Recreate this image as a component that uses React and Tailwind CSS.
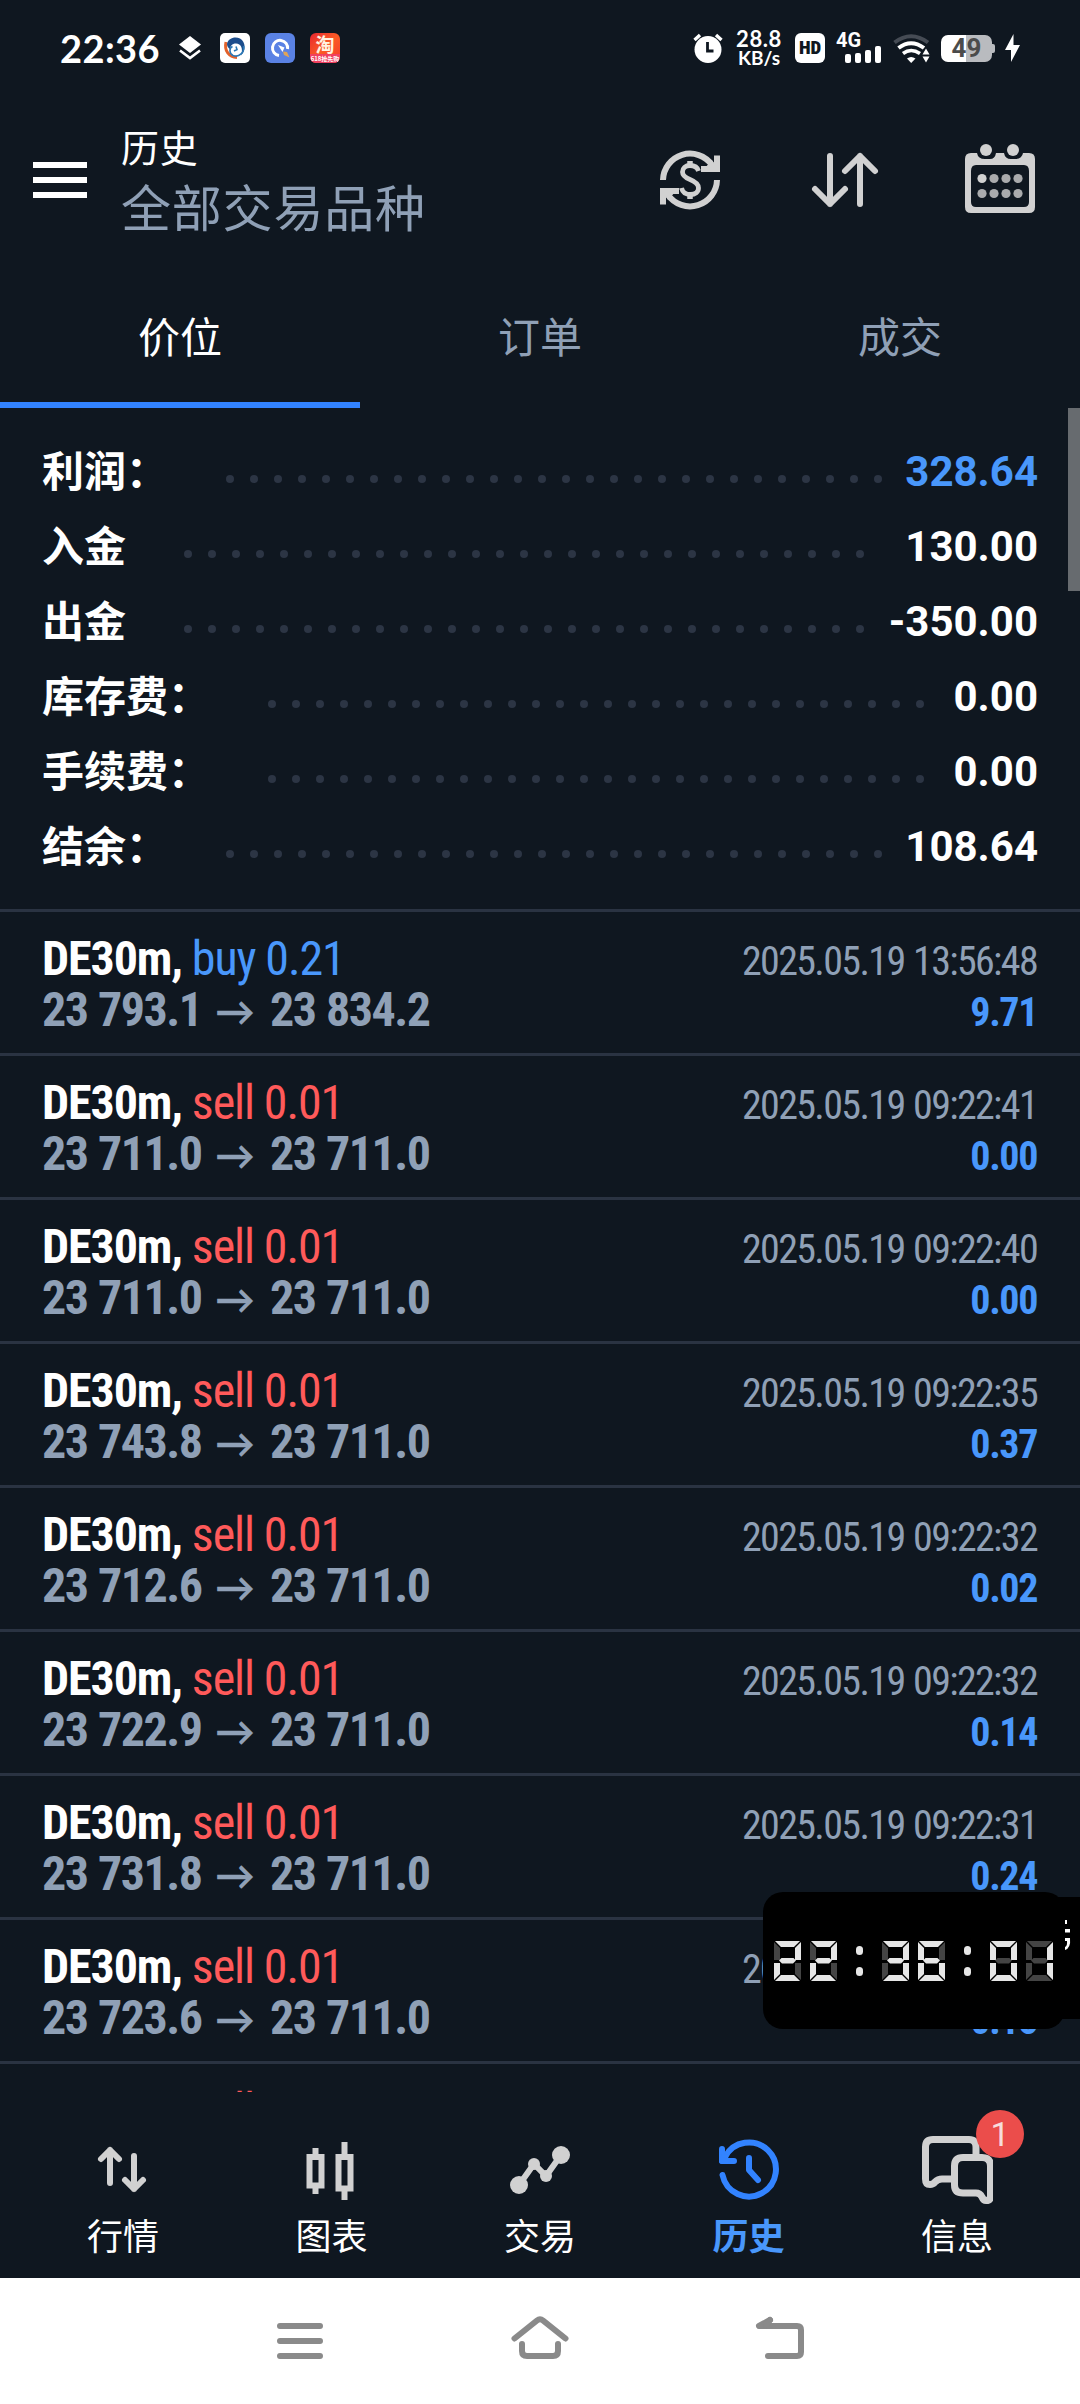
import React, { useState } from 'react';

const summary = [
  { label: '利润：', value: '328.64', dots: 28, highlight: true },
  { label: '入金', value: '130.00', dots: 29 },
  { label: '出金', value: '-350.00', dots: 29 },
  { label: '库存费：', value: '0.00', dots: 28 },
  { label: '手续费：', value: '0.00', dots: 28 },
  { label: '结余：', value: '108.64', dots: 28 },
];

const deals = [
  { side: 'buy', volume: '0.21', open: '23 793.1', close: '23 834.2', time: '2025.05.19 13:56:48', profit: '9.71' },
  { side: 'sell', volume: '0.01', open: '23 711.0', close: '23 711.0', time: '2025.05.19 09:22:41', profit: '0.00' },
  { side: 'sell', volume: '0.01', open: '23 711.0', close: '23 711.0', time: '2025.05.19 09:22:40', profit: '0.00' },
  { side: 'sell', volume: '0.01', open: '23 743.8', close: '23 711.0', time: '2025.05.19 09:22:35', profit: '0.37' },
  { side: 'sell', volume: '0.01', open: '23 712.6', close: '23 711.0', time: '2025.05.19 09:22:32', profit: '0.02' },
  { side: 'sell', volume: '0.01', open: '23 722.9', close: '23 711.0', time: '2025.05.19 09:22:32', profit: '0.14' },
  { side: 'sell', volume: '0.01', open: '23 731.8', close: '23 711.0', time: '2025.05.19 09:22:31', profit: '0.24' },
  { side: 'sell', volume: '0.01', open: '23 723.6', close: '23 711.0', time: '2025.05.19 09:22:31', profit: '0.15' },
];

const tabs = ['价位', '订单', '成交'];

const StatusBar = () => (
  <div className="flex h-24 items-center pl-[60px] pr-[60px]">
    <span className="w-[119px] font-['Lato',sans-serif] text-[38px] font-bold leading-[48px] tracking-[0.4px]">22:36</span>
    <svg className="h-6 w-[22px]" viewBox="0 0 22 24" fill="none">
      <path d="M11 0 22 8.5 11 17 0 8.5Z" fill="#fff" />
      <path d="M1 14.5 11 22 21 14.5" stroke="#fff" strokeWidth="2.6" />
    </svg>
    <svg className="ml-[19px] size-[30px]" viewBox="0 0 30 30" fill="none">
      <rect width="30" height="30" rx="5" fill="#fff" />
      <path d="M6 9C4 18 9 24 17 24.500" stroke="#e2622b" strokeWidth="3" />
      <path d="M7 11C8 5 15 3 20 5.500C26 9 26 18 21 22.500C23.500 16 21 10.500 16 10.500C12 10.500 10 13 10.500 16.500C8 15 7 13 7 11Z" fill="#1c4d8c" />
      <path d="M23.500 13C25 19 19 25 13 22.500C9 20.500 9 15 12.500 13.500M16 13.500 17 16.500 14 18" stroke="#2b78b5" strokeWidth="1.600" />
    </svg>
    <svg className="ml-[15px] size-[30px]" viewBox="0 0 30 30" fill="none">
      <rect width="30" height="30" rx="6" fill="#5a82e4" />
      <path d="M14 22.500A7.600 7.600 0 1 1 22.600 16" stroke="#fff" strokeWidth="3" />
      <path d="M13 12 19.500 14.500 17.500 19Z" fill="#fff" />
      <path d="M18 18.500 22 19 24.500 24.500 19 22Z" fill="#e0a458" />
    </svg>
    <div className="ml-[15px] flex size-[30px] flex-col items-center overflow-hidden rounded-[6px] bg-gradient-to-br from-[#e8202f] via-[#fa5a24] to-[#f6342c] font-['Noto_Sans_CJK_SC',sans-serif] font-bold">
      <span className="h-[21px] text-[19px] leading-[21px] text-[#fff3e2]">淘</span>
      <span className="h-[9px] w-full whitespace-nowrap bg-[#f04060] text-center text-[6px] leading-[9px]">618抢先购</span>
    </div>

    <svg className="ml-auto h-[30px] w-[30px]" viewBox="0 0 30 30" fill="none">
      <circle cx="15" cy="16.500" r="13.500" fill="#fff" />
      <path d="M1.500 7 7 2M28.500 7 23 2" stroke="#fff" strokeWidth="3.400" />
      <path d="M14.500 9V18H20.500" stroke="#0f1720" strokeWidth="2.800" />
    </svg>
    <div className="ml-3 flex w-[48px] flex-col items-center whitespace-nowrap font-['Lato',sans-serif] font-bold">
      <span className="text-[22px] leading-[20px] tracking-[0.6px]">28.8</span>
      <span className="text-[19px] leading-[18px]">KB/s</span>
    </div>
    <div className="ml-3 flex size-[30px] items-center justify-center rounded-[6px] bg-white font-['Roboto',sans-serif] text-[19px] font-black leading-[30px] text-[#0f1720] [font-stretch:85%]">
      HD
    </div>
    <div className="ml-[11px] flex h-[30px] w-[46px] flex-col">
      <span className="h-[13px] font-['Roboto',sans-serif] text-[20px] font-bold leading-[14px] [font-stretch:88%]">4G</span>
      <div className="flex h-[17px] items-end gap-[4px] pl-[9px]">
        <i className="h-[9px] w-[6px] rounded-[2px] bg-white" />
        <i className="h-[10px] w-[6px] rounded-[2px] bg-white" />
        <i className="h-[13px] w-[6px] rounded-[2px] bg-white" />
        <i className="h-[17px] w-[6px] rounded-[2px] bg-white" />
      </div>
    </div>
    <svg className="ml-[11px] h-[30px] w-[38px]" viewBox="0 0 38 30" fill="none">
      <path d="M1.500 9.500Q18 -3 35 9.500" stroke="#454b54" strokeWidth="4" />
      <path d="M5.500 15Q18 5.500 31 15" stroke="#fff" strokeWidth="4" />
      <path d="M10 20.500Q18 14.500 27 20.500" stroke="#fff" strokeWidth="3.600" />
      <path d="M14 25.500Q18 22.500 22.500 25.500L18.200 30Z" fill="#fff" />
      <path d="M33 15.500 36.500 21.500H29.500ZM33 29.500 36.500 23.500H29.500Z" fill="#fff" />
    </svg>
    <div className="ml-[10px] flex items-center">
      <div className="flex h-[27px] w-[51px] items-center justify-center rounded-[7px] bg-[linear-gradient(90deg,#fff_50%,#b9bbbf_50%)] font-['Roboto',sans-serif] text-[26px] font-bold leading-[27px] text-[#4b4b4b]">
        49
      </div>
      <i className="h-[9px] w-[3px] rounded-r-[2px] bg-[#b9bbbf]" />
    </div>
    <svg className="ml-[10px] h-[28px] w-[15px]" viewBox="0 0 15 28">
      <path d="M8.500 0 0 16H6L6 28 15 11H8.500Z" fill="#fff" />
    </svg>
  </div>
);

const Header = () => (
  <header className="flex h-[168px] items-center pl-[33px] pr-[44px]">
    <div className="flex flex-col gap-[9px]">
      <i className="h-[6px] w-[54px] bg-white" />
      <i className="h-[6px] w-[54px] bg-white" />
      <i className="h-[6px] w-[54px] bg-white" />
    </div>
    <div className="ml-[34px] flex flex-col pb-[1px] font-['Noto_Sans_CJK_SC',sans-serif]">
      <h1 className="text-[38px] leading-[52px] tracking-[0.8px]">历史</h1>
      <p className="text-[50px] leading-[67px] tracking-[0.8px] text-[#8fa0b6]">全部交易品种</p>
    </div>
    <div className="ml-auto flex gap-[83px]">
      <svg className="size-[72px]" viewBox="0 0 72 72" fill="none" stroke="#d1d1d1" strokeWidth="6">
        <path d="M9 36A27 27 0 0 1 58 21" />
        <path d="M63 36A27 27 0 0 1 14 51" />
        <path d="M63 11.500V25H47" />
        <path d="M9 60.500V47H25" />
        <path d="M63 25 50 25 58 16ZM9 47 22 47 14 56Z" fill="#d1d1d1" stroke="none" />
        <path d="M44.500 27C43.500 23.500 40 21.500 36 21.500C31.500 21.500 28.500 24 28.500 28C28.500 32 31.500 33.700 36 35.500C41 37.500 44.500 39.500 44.500 44C44.500 48 41 50.500 36.500 50.500C31.500 50.500 28.500 48 27.500 44" strokeWidth="4.800" />
        <path d="M36 17V22M36 50V55" strokeWidth="5.500" />
      </svg>
      <svg className="size-[72px]" viewBox="0 0 72 72" fill="none" stroke="#d1d1d1" strokeWidth="6" strokeLinecap="round" strokeLinejoin="round">
        <path d="M21 12V60M6 45 21 60 36 45" />
        <path d="M51 60V12M36 27 51 12 66 27" />
      </svg>
      <svg className="size-[72px]" viewBox="0 0 72 72" fill="#d1d1d1">
        <path fillRule="evenodd" d="M7 9H13Q14 15 21 15H26Q31 15 32 9H40Q41 15 47 15H51Q58 15 59 9H65Q71 9 71 15V63Q71 69 65 69H7Q1 69 1 63V15Q1 9 7 9ZM12 21Q7 21 7 27V58Q7 63 12 63H60Q65 63 65 58V27Q65 21 60 21Z" />
        <circle cx="22" cy="6" r="6" />
        <circle cx="49" cy="6" r="6" />
        <circle cx="18" cy="34.500" r="4.600" />
        <g opacity="0.8">
          <circle cx="30" cy="34.500" r="4.600" />
          <circle cx="42" cy="34.500" r="4.600" />
          <circle cx="54" cy="34.500" r="4.600" />
          <circle cx="18" cy="49.500" r="4.600" />
          <circle cx="30" cy="49.500" r="4.600" />
          <circle cx="42" cy="49.500" r="4.600" />
          <circle cx="54" cy="49.500" r="4.600" />
        </g>
      </svg>
    </div>
  </header>
);

const SummaryRow = ({ label, value, dots, highlight }) => (
  <div className="flex h-[75px] items-center">
    <span className="whitespace-nowrap pb-[5px] font-['Noto_Sans_CJK_SC',sans-serif] text-[42px] font-bold leading-[70px]">{label}</span>
    <div className="ml-[58px] mt-[15px] flex gap-4">
      {Array.from({ length: dots }, (_, i) => (
        <i key={i} className="size-2 rounded-full bg-[#2c3544]" />
      ))}
    </div>
    <span
      className={`ml-auto font-['Roboto',sans-serif] text-[42px] font-bold leading-[75px] ${
        highlight ? 'text-[#4997fb]' : 'text-white'
      }`}
    >
      {value}
    </span>
  </div>
);

const DealRow = ({ deal }) => (
  <div className="h-[144px] shrink-0 border-b-[3px] border-[#2a3342] pl-[42px] pr-[43px] pt-[21px] font-['Roboto',sans-serif] text-[48px] leading-[51px] tracking-[-1.1px] [font-stretch:75%]">
    <div className="flex h-[51px] items-baseline justify-between whitespace-nowrap">
      <p>
        <span className="font-bold">DE30m,</span>{' '}
        <span className={deal.side === 'buy' ? 'text-[#4997fb]' : 'text-[#ff5a5a]'}>
          {deal.side} {deal.volume}
        </span>
      </p>
      <p className="text-[40px] leading-[40px] tracking-[-1.65px] [word-spacing:1px] text-[#8fa0b6]">{deal.time}</p>
    </div>
    <div className="flex h-[51px] items-baseline justify-between whitespace-nowrap font-bold">
      <p className="flex items-baseline tracking-[-1.5px] [word-spacing:1px] text-[#8fa0b6]">
        <span className="w-[173px]">{deal.open}</span>
        <span className="w-[55px] font-['Lato',sans-serif] text-[40px] font-bold leading-[40px]">→</span>
        <span>{deal.close}</span>
      </p>
      <p className="text-[40px] leading-[40px] tracking-[-1.4px] text-[#4997fb]">{deal.profit}</p>
    </div>
  </div>
);

const NavItem = ({ label, active, badge, children }) => (
  <div className="flex w-[208.5px] flex-col items-center">
    <div className="relative size-[72px]">
      <svg className="size-[72px]" viewBox="0 0 72 72" fill="none" stroke={active ? '#3283ff' : '#d1d1d1'} strokeWidth="6">
        {children}
      </svg>
      {badge && (
        <span className="absolute -top-[25px] left-[55px] flex size-12 items-center justify-center rounded-full bg-[#eb4d4b] font-['Roboto',sans-serif] text-[34px] leading-[48px] text-[#f7dcdc]">
          {badge}
        </span>
      )}
    </div>
    <span
      className={`mt-[5px] font-['Noto_Sans_CJK_SC',sans-serif] text-[36px] leading-[44px] ${
        active ? 'font-bold text-[#4997fb]' : 'text-white'
      }`}
    >
      {label}
    </span>
  </div>
);

const ON = '#e6e6e6';
const OFF = '#444444';

// Lit segments per digit: top, top left, top right, middle, bottom left, bottom right, bottom
const SEGMENTS = {
  0: [1, 1, 1, 0, 1, 1, 1],
  1: [0, 0, 1, 0, 0, 1, 0],
  2: [1, 0, 1, 1, 1, 0, 1],
  3: [1, 0, 1, 1, 0, 1, 1],
  6: [1, 1, 0, 1, 1, 1, 1],
};

const Digit = ({ value }) => {
  const [top, tl, tr, mid, bl, br, bottom] = SEGMENTS[value].map((lit) => (lit ? ON : OFF));
  return (
    <div className="relative flex h-[40px] w-[27px] flex-col justify-between">
      <div
        className="h-[19px] border-x-[6px] border-t-[6px]"
        style={{ borderTopColor: top, borderLeftColor: tl, borderRightColor: tr }}
      />
      <div
        className="h-[18px] border-x-[6px] border-b-[6px]"
        style={{ borderBottomColor: bottom, borderLeftColor: bl, borderRightColor: br }}
      />
      <i
        className="absolute left-[5px] top-[17px] h-[6px] w-[17px] [clip-path:polygon(3px_0,14px_0,100%_50%,14px_100%,3px_100%,0_50%)]"
        style={{ backgroundColor: mid }}
      />
      {/* dark seams between neighbouring segments */}
      <svg className="absolute inset-0 h-[40px] w-[27px]" viewBox="0 0 27 40" stroke="#000" strokeWidth="1.4">
        <path d="M0 0 7 7M27 0 20 7M0 40 7 33M27 40 20 33" />
      </svg>
    </div>
  );
};

const FloatingClock = ({ time }) => (
  <>
    <div className="absolute left-[1034px] top-[1897px] flex h-[122px] w-[46px] justify-end bg-black">
      <svg className="mt-[21px] h-9 w-4" viewBox="0 0 16 36" fill="#fff">
        <rect x="1" y="2" width="2" height="4" />
        <rect x="1" y="11" width="5" height="3.500" />
        <path d="M1 20H6Q7 30 1 32V29Q3.500 28 3 23H1Z" />
      </svg>
    </div>
    <div
      role="img"
      aria-label={time}
      className="absolute left-[763px] top-[1892px] flex h-[137px] w-[302px] items-center gap-[9px] rounded-[20px] bg-black pl-[11px]"
    >
      {time.split('').map((ch, i) =>
        ch === ':' ? (
          <div key={i} className="flex w-[27px] flex-col items-center gap-[12px]">
            <i className="h-[9px] w-[7px] rounded-full bg-[#e6e6e6]" />
            <i className="h-[9px] w-[7px] rounded-full bg-[#e6e6e6]" />
          </div>
        ) : (
          <Digit key={i} value={ch} />
        )
      )}
    </div>
  </>
);

const App = () => {
  const [activeTab, setActiveTab] = useState('价位');

  return (
    <div className="relative flex h-[2404px] w-[1080px] flex-col overflow-hidden bg-[#0f1720] text-white">
      <StatusBar />
      <Header />

      <nav className="flex h-[144px]">
        {tabs.map((tab) => (
          <button
            key={tab}
            onClick={() => setActiveTab(tab)}
            className={`flex-1 border-b-[6px] pt-[3px] font-['Noto_Sans_CJK_SC',sans-serif] text-[42px] ${
              tab === activeTab ? 'border-[#3283ff] text-white' : 'border-transparent text-[#8fa0b6]'
            }`}
          >
            {tab}
          </button>
        ))}
      </nav>

      <main className="relative flex h-[1684px] flex-col overflow-hidden">
        <section className="h-[504px] shrink-0 border-b-[3px] border-[#2a3342] px-[42px] pt-[26px]">
          {summary.map((row) => (
            <SummaryRow key={row.label} {...row} />
          ))}
        </section>
        {deals.map((deal, i) => (
          <DealRow key={i} deal={deal} />
        ))}
        <DealRow deal={deals[7]} />
        <div className="absolute right-0 top-0 h-[183px] w-3 bg-[#676b6f]" />
      </main>

      <nav className="flex h-[186px] justify-center pt-[43px]">
        <NavItem label="行情">
          <g strokeLinecap="round" strokeLinejoin="round">
            <path d="M23 48V15M14 24 23 15 32 24" />
            <path d="M47 21V54M38 45 47 54 56 45" />
          </g>
        </NavItem>
        <NavItem label="图表">
          <path d="M13.500 22H25.500V50.500H13.500ZM19.500 13V22M19.500 51V59" />
          <path d="M42.500 22H54.500V53.500H42.500ZM48.500 7V22M48.500 54V65" />
        </NavItem>
        <NavItem label="交易">
          <path d="M15 50 30 29 42 41 57 20" />
          <g fill="#d1d1d1" stroke="none">
            <circle cx="15" cy="50" r="9" />
            <circle cx="30" cy="29" r="6" />
            <circle cx="42" cy="41" r="6" />
            <circle cx="57" cy="20" r="9" />
          </g>
        </NavItem>
        <NavItem label="历史" active>
          <g strokeLinecap="round" strokeLinejoin="round">
            <path d="M9.500 40A27 27 0 1 0 12 22" />
            <path d="M9 14V26H21" />
            <path d="M9 26 11 22 14 26Z" fill="#3283ff" />
            <path d="M36 23V35L45 45" />
          </g>
        </NavItem>
        <NavItem label="信息" badge="1">
          <path
            d="M55 22V12Q55 4.500 48 4.500H12Q4.500 4.500 4.500 12V44Q4.500 49.500 9 49.500Q12 49.500 14 47Q17 44 21 44H33"
            strokeWidth="7"
          />
          <path
            d="M42 22.500H61Q69.500 22.500 69.500 31V61Q69.500 65.500 65 65.500Q62.500 65.500 61 62Q59 58 55 58H42Q33.500 58 33.500 50V31Q33.500 22.500 42 22.500Z"
            strokeWidth="7"
          />
        </NavItem>
      </nav>

      <div className="flex h-[126px] items-center justify-center gap-[168px] bg-white">
        <svg className="size-[72px]" viewBox="0 0 72 72" fill="none" stroke="#8a8a8a" strokeWidth="6" strokeLinecap="round">
          <path d="M16 21H56M16 36H56M16 51H56" />
        </svg>
        <svg className="size-[72px]" viewBox="0 0 72 72" fill="none" stroke="#8a8a8a" strokeWidth="6" strokeLinecap="round" strokeLinejoin="round">
          <path d="M10.500 33.500 33 15.500Q36 13 39 15.500L61.500 33.500" />
          <path d="M18 39V46Q18 51 23 51H49Q54 51 54 46V39" />
        </svg>
        <svg className="size-[72px]" viewBox="0 0 72 72" fill="none" stroke="#8a8a8a" strokeWidth="6" strokeLinecap="round" strokeLinejoin="round">
          <path d="M26 15 15 21H53Q57 21 57 25V47Q57 51 53 51H24" />
          <path d="M26 15 22 20" />
        </svg>
      </div>

      <FloatingClock time="22:36:01" />
    </div>
  );
};

export default App;
